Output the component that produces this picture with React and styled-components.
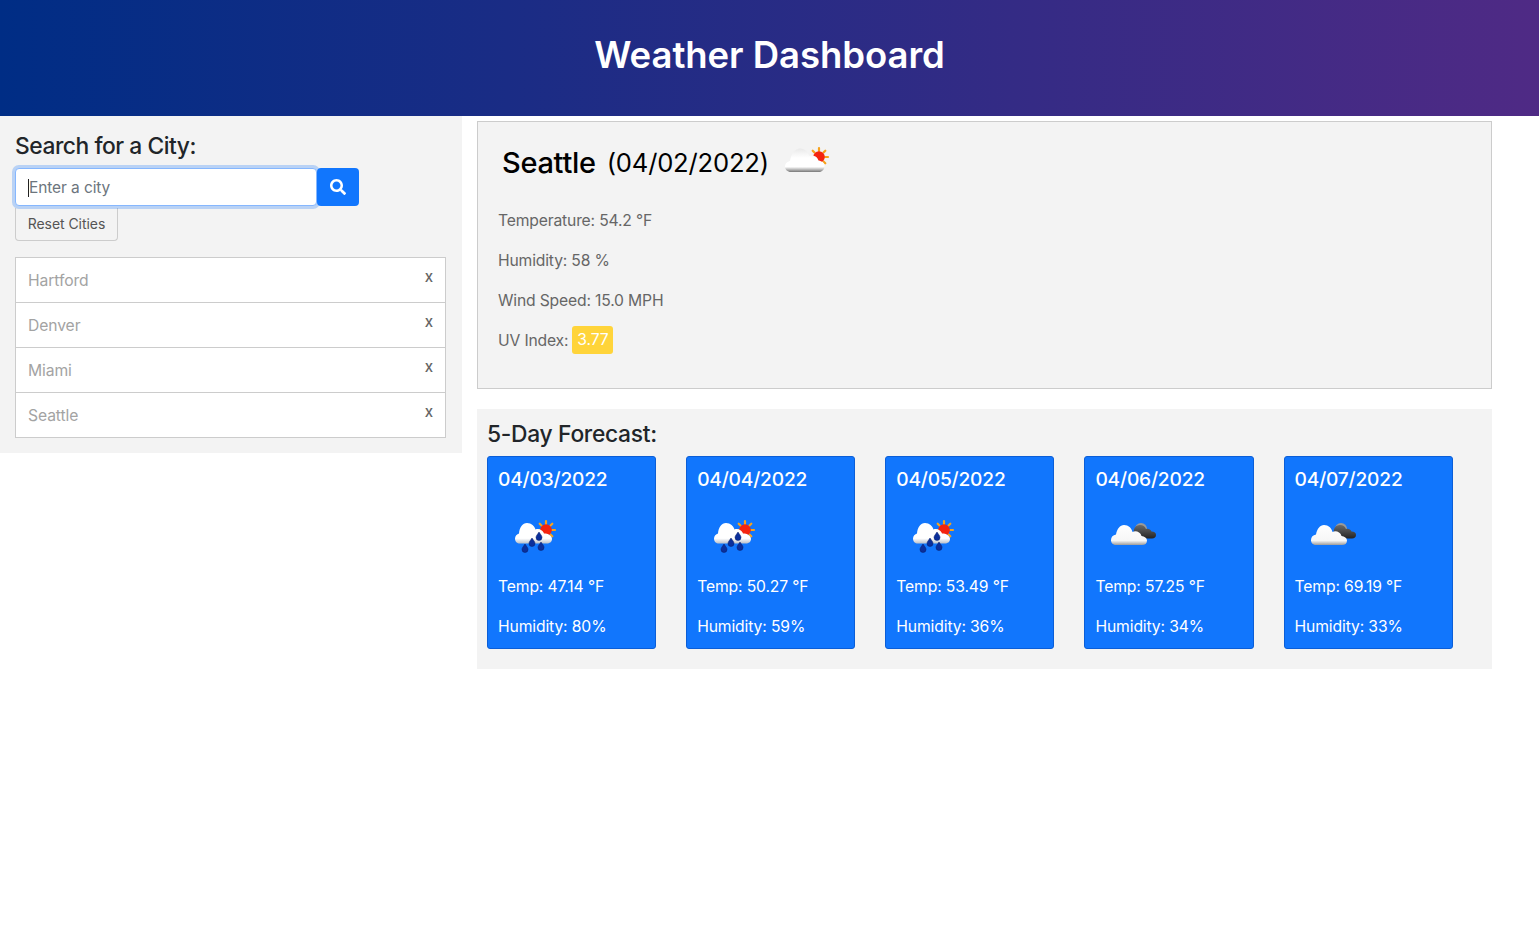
import styled, { createGlobalStyle } from 'styled-components';

const cities = ['Hartford', 'Denver', 'Miami', 'Seattle'];

const forecast = [
  { date: '04/03/2022', icon: 'rain', temp: '47.14', humidity: 80 },
  { date: '04/04/2022', icon: 'rain', temp: '50.27', humidity: 59 },
  { date: '04/05/2022', icon: 'rain', temp: '53.49', humidity: 36 },
  { date: '04/06/2022', icon: 'clouds', temp: '57.25', humidity: 34 },
  { date: '04/07/2022', icon: 'clouds', temp: '69.19', humidity: 33 },
];

const GlobalStyle = createGlobalStyle`
  * { box-sizing: border-box; }
  body {
    margin: 0;
    background: #fff;
    color: #212529;
    font-family: Inter, "Liberation Sans", sans-serif;
    font-size: 16px;
    line-height: 24px;
  }
`;

const Header = styled.header`
  height: 116px;
  display: flex;
  align-items: center;
  justify-content: center;
  background: linear-gradient(90deg, #002d85 0%, #4f2a85 100%);
`;

const Title = styled.h1`
  margin: 0 0 6px;
  color: #fff;
  font-size: 36.5px;
  line-height: 44px;
  font-weight: 600;
  letter-spacing: -0.05px;
`;

const Page = styled.div`
  display: flex;
  align-items: flex-start;
`;

const Sidebar = styled.aside`
  width: 462px;
  height: 337px;
  padding: 15px 16px 15px 15px;
  background: #f3f3f3;
`;

const SideTitle = styled.h2`
  margin: 0 0 7px;
  font-size: 22.8px;
  line-height: 30px;
  font-weight: 500;
  letter-spacing: -0.45px;
`;

const SearchRow = styled.div`
  display: flex;
`;

const FakeInput = styled.div`
  width: 302px;
  height: 38px;
  padding: 1px 12px 0;
  display: flex;
  align-items: center;
  background: #fff;
  border: 1px solid #86b7fe;
  border-radius: 4px;
  box-shadow: 0 0 0 3px rgba(13, 110, 253, 0.25);
  color: #6c757d;
  font-size: 15.5px;
  letter-spacing: -0.1px;
`;

const Caret = styled.span`
  width: 1px;
  height: 18px;
  background: #222;
`;

const SearchButton = styled.button`
  width: 42px;
  height: 38px;
  padding: 0;
  display: flex;
  align-items: center;
  justify-content: center;
  background: #1176fd;
  border: 0;
  border-radius: 4px;
`;

const ResetButton = styled.button`
  display: block;
  width: 103px;
  height: 33px;
  margin-top: 2px;
  padding: 0 0 2px;
  background: #f3f3f3;
  border: 1px solid #ccc;
  border-top: 0;
  border-radius: 0 0 4px 4px;
  color: #555;
  font-family: inherit;
  font-size: 14px;
  letter-spacing: -0.05px;
`;

const CityList = styled.ul`
  margin: 16px 0 0;
  padding: 0;
  list-style: none;
  border: 1px solid #ccc;
  background: #fff;
`;

const CityItem = styled.li`
  height: ${(p) => (p.$last ? '44px' : '45px')};
  padding: 1px 12px 0;
  display: flex;
  justify-content: space-between;
  color: #a3a3a3;
  line-height: 44px;
  font-size: 15.7px;
  letter-spacing: -0.1px;
  border-bottom: ${(p) => (p.$last ? '0' : '1px solid #ccc')};
`;

const Remove = styled.span`
  margin-top: -4px;
  color: #666;
  font-size: 15px;
  font-weight: 500;
  line-height: 44px;
`;

const Main = styled.main`
  width: 1015px;
  margin-left: 15px;
  padding-top: 5px;
`;

const Current = styled.section`
  height: 268px;
  padding: 20px 20px 0;
  background: #f3f3f3;
  border: 1px solid #ccc;
`;

const CityHeading = styled.div`
  height: 51px;
  margin-bottom: 16px;
  padding-left: 4px;
  display: flex;
  align-items: flex-start;
  color: #000;
`;

const CityName = styled.span`
  margin-top: 2px;
  font-size: 29px;
  line-height: 38px;
  font-weight: 500;
  letter-spacing: -0.3px;
`;

const CityDate = styled.span`
  margin: 2px 0 0 11px;
  font-size: 25.6px;
  line-height: 38px;
  letter-spacing: -0.2px;
`;

const HeadingIcon = styled.span`
  margin: 3px 0 0 16px;
`;

const Stat = styled.p`
  margin: 0 0 16px;
  color: #666;
  font-size: 15.7px;
  letter-spacing: -0.17px;
  line-height: 24px;
`;

const UvBadge = styled.span`
  display: inline-block;
  height: 28px;
  margin: -3px 0 -1px 4px;
  padding: 0 5px;
  background: #ffd43a;
  border-radius: 3px;
  color: #fff;
  line-height: 28px;
  vertical-align: top;
`;

const Forecast = styled.section`
  height: 260px;
  margin-top: 20px;
  padding: 10px;
  background: #f3f3f3;
`;

const ForecastTitle = styled.h2`
  margin: 0 0 7px;
  font-size: 22.8px;
  line-height: 30px;
  font-weight: 500;
  letter-spacing: -0.3px;
`;

const Cards = styled.div`
  display: flex;
  gap: 30px;
`;

const Card = styled.article`
  width: 169.15px;
  height: 193px;
  padding: 10px 10px 0;
  background: #1176fd;
  border: 1px solid #0b5ed7;
  border-radius: 3px;
  color: #fff;
`;

const CardDate = styled.h3`
  margin: 0;
  font-size: 19.2px;
  line-height: 24px;
  font-weight: 500;
  letter-spacing: -0.2px;
`;

const CardIcon = styled.div`
  height: 74px;
  margin-top: 10px;
  padding: 18px 0 0 ${(p) => p.$left}px;
  display: flex;
  align-items: flex-start;
`;

const CardText = styled.p`
  margin: 0 0 16px;
  font-size: 15.7px;
  letter-spacing: -0.13px;
  line-height: 24px;
`;

const IconSvg = styled.svg`
  display: block;
  filter: blur(0.35px);
`;

const Sun = ({ x, y }) => (
  <g transform={`translate(${x} ${y})`}>
    <g stroke="#f7a21c" strokeWidth="2.2" strokeLinecap="round">
      <path d="M0-9V-6M6.300-6.300L4.500-4.500M9 0H6M6.300 6.300L4.500 4.500M-6.300-6.300L-4.500-4.500M-9 0H-6M-6.300 6.300L-4.500 4.500M0 9V6" />
    </g>
    <circle r="5.8" fill="#f4240f" />
  </g>
);

// sky icon on the grey panel, cloud with a grey base and a sun behind
const CloudSun = () => (
  <IconSvg width="46" height="30" viewBox="0 0 46 30">
    <defs>
      <linearGradient id="cloudFill" x1="0" y1="0" x2="0" y2="1">
        <stop offset="0" stopColor="#e9e9e9" />
        <stop offset="0.4" stopColor="#ffffff" />
        <stop offset="0.78" stopColor="#ffffff" />
        <stop offset="1" stopColor="#777777" />
      </linearGradient>
    </defs>
    <Sun x={34} y={12} />
    <path
      d="M6 27C2.500 27 0 24.500 0 21.500 0 18.500 2.500 16.500 5 16 6 9 10 3.500 15 3.500c4.500 0 8 3 9.500 7.500 2-.8 4-.5 6 .5 1.500 1 2.500 2.500 3 4 3.500.5 6 2.500 6 5.500 0 3.500-2.500 6-5.500 6z"
      fill="url(#cloudFill)"
    />
  </IconSvg>
);

const Drop = ({ x, y }) => (
  <path
    d={`M${x} ${y}c-2 3-3 4-3 5.500a3 3 0 0 0 6 0c0-1.500-1-2.500-3-5.500z`}
    fill="#0b2f9b"
    stroke="#0a1f6b"
    strokeWidth=".5"
  />
);

const RainIcon = () => (
  <IconSvg width="44" height="34" viewBox="0 0 44 34">
    <defs>
      <linearGradient id="rainCloud" x1="0" y1="0" x2="0" y2="1">
        <stop offset="0" stopColor="#ffffff" />
        <stop offset="0.75" stopColor="#ffffff" />
        <stop offset="1" stopColor="#b9bfc9" />
      </linearGradient>
    </defs>
    <Sun x={32} y={11} />
    <path
      d="M6 24.500C3 24.500 1 22.500 1 19.500 1 17 3 15 5 14.500 5.500 8.500 8.500 4 13 4c4.500 0 7.500 3 8.500 6.500 2-.8 4-.5 5.500.5 1.500 1 2.500 2 3 3.500 4 0 8 2 8 5.500 0 3-2.500 4.500-5 4.500z"
      fill="url(#rainCloud)"
    />
    <Drop x={11} y={25} />
    <Drop x={18} y={19} />
    <Drop x={27} y={23} />
    <Drop x={25} y={13} />
  </IconSvg>
);

const CloudsIcon = () => (
  <IconSvg width="48" height="27" viewBox="0 0 48 27">
    <defs>
      <linearGradient id="darkCloud" x1="0" y1="0" x2="0" y2="1">
        <stop offset="0" stopColor="#6b6b6b" />
        <stop offset="1" stopColor="#242424" />
      </linearGradient>
      <linearGradient id="whiteCloud" x1="0" y1="0" x2="0" y2="1">
        <stop offset="0" stopColor="#ffffff" />
        <stop offset="0.78" stopColor="#f6f6f6" />
        <stop offset="1" stopColor="#9c9c9c" />
      </linearGradient>
    </defs>
    <circle cx="31" cy="10" r="6" fill="#9a9a9a" />
    <path
      d="M24 15c-1-5 1-9 6-9 3 0 5 1.500 6 4 2.500-.5 4.500.5 5.500 2.500 3 0 4.500 1.500 4.500 3.500 0 2-1.500 3.500-4 3.500H30z"
      fill="url(#darkCloud)"
    />
    <path
      d="M6 26C2.500 26 1 23.500 1 21 1 18 3 16 6 15.500 7 10 10 6 14 6c4.500 0 7.500 3 8.500 7 2-1 4.500-1 6.500.5 1.500 1 2 2 2.500 3.500 3 .5 5.500 2 5.500 4.500 0 3-2 4.500-5 4.500z"
      fill="url(#whiteCloud)"
    />
  </IconSvg>
);

const SearchIcon = () => (
  <svg width="16" height="16" viewBox="0 0 512 512" fill="#fff">
    <path d="M505 442.700L405.300 343c-4.500-4.500-10.600-7-17-7H372c27.600-35.300 44-79.700 44-128C416 93.100 322.900 0 208 0S0 93.100 0 208s93.100 208 208 208c48.300 0 92.700-16.400 128-44v16.300c0 6.400 2.500 12.500 7 17l99.700 99.700c9.400 9.400 24.600 9.400 33.900 0l28.300-28.300c9.400-9.400 9.400-24.600.1-34zM208 336c-70.700 0-128-57.200-128-128 0-70.700 57.200-128 128-128 70.700 0 128 57.200 128 128 0 70.700-57.200 128-128 128z" />
  </svg>
);

const App = () => {
  return (
    <>
      <GlobalStyle />
      <Header>
        <Title>Weather Dashboard</Title>
      </Header>
      <Page>
        <Sidebar>
          <SideTitle>Search for a City:</SideTitle>
          <SearchRow>
            <FakeInput>
              <Caret />
              Enter a city
            </FakeInput>
            <SearchButton aria-label="Search">
              <SearchIcon />
            </SearchButton>
          </SearchRow>
          <ResetButton>Reset Cities</ResetButton>
          <CityList>
            {cities.map((city, i) => (
              <CityItem key={city} $last={i === cities.length - 1}>
                {city}
                <Remove>x</Remove>
              </CityItem>
            ))}
          </CityList>
        </Sidebar>
        <Main>
          <Current>
            <CityHeading>
              <CityName>Seattle</CityName>
              <CityDate>(04/02/2022)</CityDate>
              <HeadingIcon>
                <CloudSun />
              </HeadingIcon>
            </CityHeading>
            <Stat>Temperature: 54.2 °F</Stat>
            <Stat>Humidity: 58 %</Stat>
            <Stat>Wind Speed: 15.0 MPH</Stat>
            <Stat>
              UV Index:<UvBadge>3.77</UvBadge>
            </Stat>
          </Current>
          <Forecast>
            <ForecastTitle>5-Day Forecast:</ForecastTitle>
            <Cards>
              {forecast.map((day) => (
                <Card key={day.date}>
                  <CardDate>{day.date}</CardDate>
                  <CardIcon $left={day.icon === 'rain' ? 16 : 15}>
                    {day.icon === 'rain' ? <RainIcon /> : <CloudsIcon />}
                  </CardIcon>
                  <CardText>Temp: {day.temp} °F</CardText>
                  <CardText>Humidity: {day.humidity}%</CardText>
                </Card>
              ))}
            </Cards>
          </Forecast>
        </Main>
      </Page>
    </>
  );
};

export default App;
